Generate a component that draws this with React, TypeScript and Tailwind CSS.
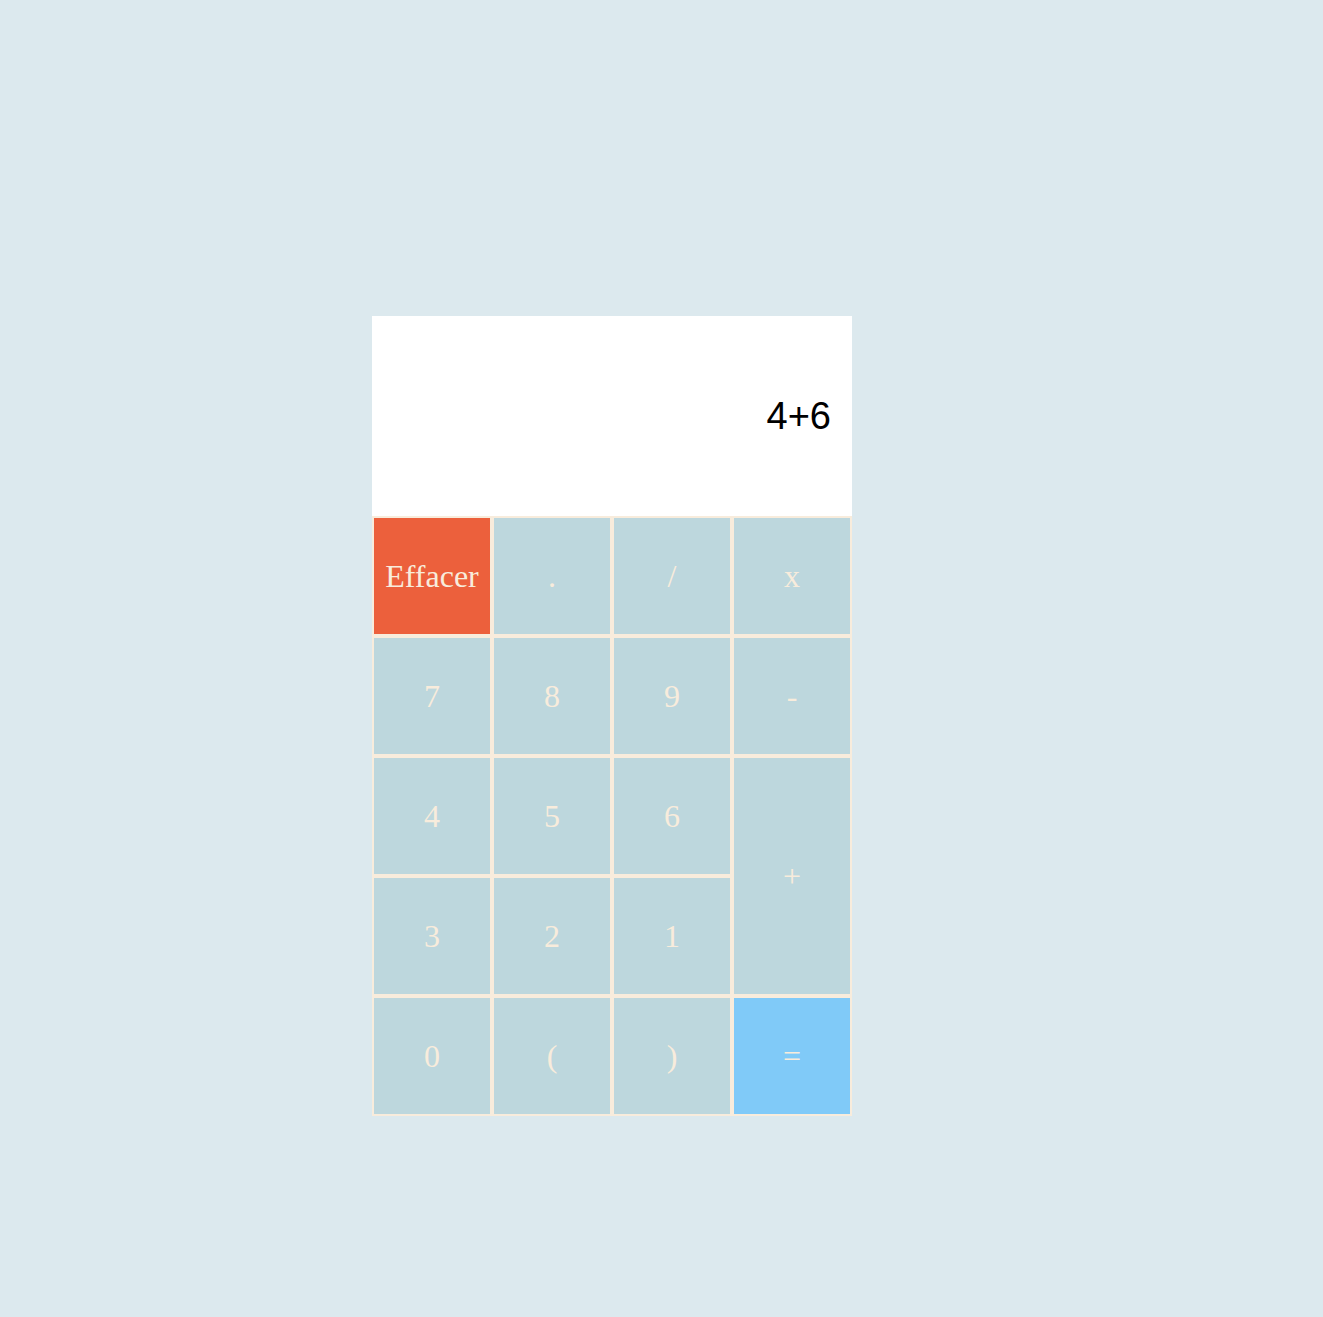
import React from "react";

const btn =
  "flex items-center justify-center border-2 border-[#f8ecdc] text-[32px] text-[#f8ecdc] leading-none";

export default function App() {
  const keys: { label: string; cls?: string }[] = [
    { label: "Effacer", cls: "bg-[#ec603c]" },
    { label: "." },
    { label: "/" },
    { label: "x" },
    { label: "7" },
    { label: "8" },
    { label: "9" },
    { label: "-" },
    { label: "4" },
    { label: "5" },
    { label: "6" },
    { label: "+", cls: "row-span-2" },
    { label: "3" },
    { label: "2" },
    { label: "1" },
    { label: "0" },
    { label: "(" },
    { label: ")" },
    { label: "=", cls: "bg-[#80caf8]" },
  ];
  return (
    <div className="min-h-[1317px] w-full bg-[#dce9ee] pt-[316px] pl-[372px]">
      <div className="w-[480px]">
        <div
          className="h-[200px] bg-white flex items-center justify-end pr-[21px] text-[38px] text-black"
          style={{ fontFamily: '"Liberation Sans", Arial, sans-serif' }}
        >
          4+6
        </div>
        <div
          className="grid grid-cols-4 auto-rows-[120px]"
          style={{ fontFamily: '"Liberation Serif", "Times New Roman", serif' }}
        >
          {keys.map((k) => (
            <div key={k.label} className={`${btn} ${k.cls ?? "bg-[#bdd7dd]"} ${k.cls === "row-span-2" ? "bg-[#bdd7dd]" : ""}`}>
              {k.label}
            </div>
          ))}
        </div>
      </div>
    </div>
  );
}
